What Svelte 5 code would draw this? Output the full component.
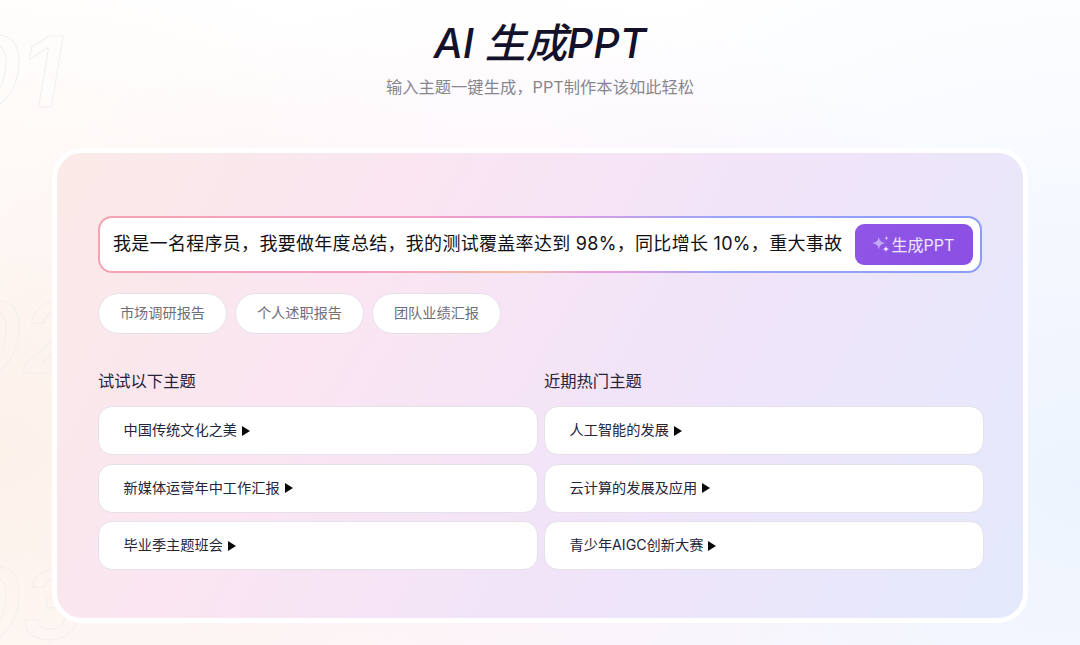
<script>
  const comma = '\uFF0C';
  const chips = ['市场调研报告', '个人述职报告', '团队业绩汇报'];
  const columns = [
    { title: '试试以下主题', items: ['中国传统文化之美', '新媒体运营年中工作汇报', '毕业季主题班会'] },
    { title: '近期热门主题', items: ['人工智能的发展', '云计算的发展及应用', '青少年AIGC创新大赛'] }
  ];
  const marks = ['01', '02', '03'];
  const subtitle = `输入主题一键生成${comma}PPT制作本该如此轻松`;
  const prompt = `我是一名程序员${comma}我要做年度总结${comma}我的测试覆盖率达到 98%${comma}同比增长 10%${comma}重大事故`;
</script>

<div class="page">
  <div class="marks" aria-hidden="true">
    {#each marks as m}<span class="mark">{m}</span>{/each}
  </div>

  <header class="head">
    <h1>AI 生成PPT</h1>
    <p>{subtitle}</p>
  </header>

  <main class="card">
    <div class="inputwrap">
      <div class="input">
        <span class="prompt">{prompt}</span>
        <button class="go">
          <svg width="22" height="20" viewBox="0 0 20 18" aria-hidden="true">
            <path d="M8 2.2 C8.7 6 9.8 7.2 14 8.2 C9.8 9.2 8.7 10.4 8 14.2 C7.3 10.4 6.2 9.2 2 8.2 C6.2 7.2 7.3 6 8 2.2Z" fill="#c3a8f3"/>
            <path d="M15 1.4 C15.2 2.9 15.6 3.3 17 3.6 C15.6 3.9 15.2 4.3 15 5.8 C14.8 4.3 14.4 3.9 13 3.6 C14.4 3.3 14.8 2.9 15 1.4Z" fill="#e4d8fb"/>
            <path d="M14.5 10.6 C14.8 12.6 15.4 13.2 17.5 13.6 C15.4 14 14.8 14.6 14.5 16.6 C14.2 14.6 13.6 14 11.5 13.6 C13.6 13.2 14.2 12.6 14.5 10.6Z" fill="#f4effe"/>
          </svg>
          <span>生成PPT</span>
        </button>
      </div>
    </div>

    <div class="chips">
      {#each chips as c}<span class="chip">{c}</span>{/each}
    </div>

    <div class="cols">
      {#each columns as col}
        <section class="col">
          <h2>{col.title}</h2>
          <ul>
            {#each col.items as it}
              <li><span class="label">{it}</span><i class="tri"></i></li>
            {/each}
          </ul>
        </section>
      {/each}
    </div>
  </main>
</div>

<style>
  :global(body) {
    margin: 0;
    background: #fff;
  }
  .page {
    position: relative;
    width: 1080px;
    height: 645px;
    overflow: hidden;
    box-sizing: border-box;
    padding: 16px 52px 0;
    font-family: Inter, "Noto Sans CJK SC", sans-serif;
    background:
      radial-gradient(620px 500px at 0% 70%, #fdf1ea 0%, rgba(253, 241, 234, 0) 100%),
      radial-gradient(560px 430px at 45% 65%, #fbedf8 0%, rgba(251, 237, 248, 0) 100%),
      radial-gradient(700px 600px at 100% 75%, #edf3fe 0%, rgba(237, 243, 254, 0) 100%),
      #fff;
  }
  .marks {
    position: absolute;
    left: -43px;
    top: 0;
    display: flex;
    flex-direction: column;
    padding-top: 11px;
    gap: 145px;
  }
  .mark {
    display: block;
    height: 121px;
    font-family: Inter, sans-serif;
    font-size: 98px;
    line-height: 121px;
    font-weight: 600;
    font-style: italic;
    letter-spacing: 0;
    color: transparent;
    -webkit-text-stroke: 1px #f1efef;
  }
  .head {
    position: relative;
    text-align: center;
    height: 132px;
  }
  h1 {
    margin: 0;
    font-size: 41px;
    line-height: 54px;
    font-weight: 500;
    font-style: italic;
    color: #14122a;
  }
  .head p {
    margin: 5px 0 0;
    font-size: 16.3px;
    line-height: 24px;
    color: #86868f;
  }
  .card {
    position: relative;
    box-sizing: border-box;
    width: 976px;
    height: 475px;
    border: 5px solid #fff;
    border-radius: 30px;
    padding: 63px 39px 0 41px;
    background: linear-gradient(120deg, #fbeae7 0%, #fae5f2 32%, #f0e4f9 62%, #e3e9fc 100%) border-box;
  }
  .inputwrap {
    width: 884px;
    height: 57px;
    box-sizing: border-box;
    padding: 2px;
    border-radius: 14px;
    background:
      linear-gradient(90deg, rgba(245, 163, 178, 0) 30%, #f4b0a8 42%, #f3c0a0 48%, #e89be0 56%, rgba(154, 165, 249, 0) 70%) bottom / 100% 2px no-repeat,
      linear-gradient(95deg, #f5a3b2 0%, #f49fc4 35%, #e89be0 50%, #9aa5f9 70%, #8b9cfb 100%);
  }
  .input {
    display: flex;
    align-items: center;
    height: 53px;
    padding: 0 7px 0 13px;
    border-radius: 12px;
    background: #fff;
  }
  .prompt {
    flex: 1;
    min-width: 0;
    overflow: hidden;
    white-space: nowrap;
    font-size: 18px;
    line-height: 24px;
    letter-spacing: 0.3px;
    padding-bottom: 2px;
    color: #111114;
  }
  .go {
    display: flex;
    align-items: center;
    justify-content: center;
    flex: none;
    width: 118px;
    height: 41px;
    margin-left: 12px;
    padding: 0 4px 2px 0;
    border: 0;
    border-radius: 9px;
    background: linear-gradient(135deg, #9057e6, #8a4fe3);
    color: #efe7fc;
    font: inherit;
    font-size: 16px;
  }
  .chips {
    display: flex;
    gap: 8px;
    margin-top: 20px;
  }
  .chip {
    box-sizing: border-box;
    width: 129px;
    height: 41px;
    border: 1px solid #e6e0ea;
    border-radius: 21px;
    background: #fff;
    color: #6f6e78;
    font-size: 14.2px;
    line-height: 38px;
    text-align: center;
  }
  .cols {
    display: flex;
    gap: 6px;
    margin-top: 33px;
  }
  .col {
    width: 440px;
  }
  h2 {
    margin: 0;
    font-size: 16.3px;
    line-height: 28px;
    font-weight: 400;
    color: #26243a;
  }
  ul {
    list-style: none;
    margin: 11px 0 0;
    padding: 0;
    display: flex;
    flex-direction: column;
    gap: 8.5px;
  }
  li {
    display: flex;
    align-items: center;
    box-sizing: border-box;
    height: 49px;
    padding-left: 24.5px;
    border: 1px solid #e6e0ea;
    border-radius: 14px;
    background: #fff;
    color: #26243a;
    font-size: 14.2px;
  }
  .label {
    line-height: 20px;
    padding-bottom: 1px;
  }
  .tri {
    width: 0;
    height: 0;
    margin-left: 5px;
    border-left: 8.5px solid #0a0a0a;
    border-top: 5px solid transparent;
    border-bottom: 5px solid transparent;
  }
</style>
